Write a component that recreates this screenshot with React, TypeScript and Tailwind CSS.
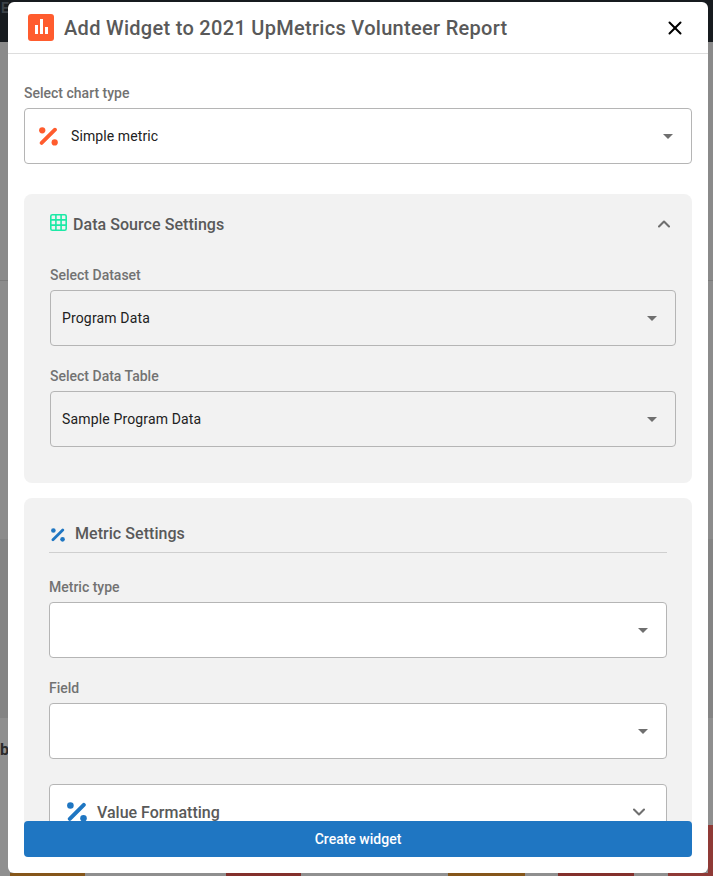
import { ChevronDown, ChevronUp, X } from 'lucide-react';

function PercentIcon({ className }: { className: string }) {
  return (
    <svg viewBox="0 0 20 20" className={className} fill="currentColor">
      <circle cx="3.4" cy="3.5" r="3.3" />
      <circle cx="16.5" cy="16.2" r="3.3" />
      <path d="M2.8 16.8 16.8 2.8" stroke="currentColor" strokeWidth="4" strokeLinecap="round" fill="none" />
    </svg>
  );
}

function GridIcon() {
  return (
    <svg viewBox="0 0 17 17" className="w-[17px] h-[17px] text-[#1de9a6] mb-1" fill="none" stroke="currentColor" strokeWidth="1.6">
      <rect x="0.8" y="0.8" width="15.4" height="15.4" rx="1.5" />
      <path d="M5.9 .8v15.4M11.1 .8v15.4M.8 5.9h15.4M.8 11.1h15.4" />
    </svg>
  );
}

function Caret() {
  return <span className="w-0 h-0 border-x-[5px] border-x-transparent border-t-[5px] border-t-[#6f6f6f]" />;
}

function SelectBox({ value, bg = 'bg-[#f2f2f2]' }: { value?: string; bg?: string }) {
  return (
    <div className={`h-14 flex items-center justify-between pl-[11px] pr-[18px] border border-[#b5b5b5] rounded ${bg}`}>
      <span className="text-sm tracking-[0.15px] text-[#212121]">{value}</span>
      <Caret />
    </div>
  );
}

function Field({ label, value, bg, className }: { label: string; value?: string; bg?: string; className?: string }) {
  return (
    <div className={className}>
      <div className="text-sm leading-4 font-medium text-[#727272] mb-[7px]">{label}</div>
      <SelectBox value={value} bg={bg} />
    </div>
  );
}

const bottomBlocks = [
  'w-[75px] bg-[#85561a]',
  'w-[141px] bg-[#8f8f8f]',
  'w-[75px] bg-[#83302c]',
  'w-[147px] bg-[#909090]',
  'w-[77px] bg-[#85561a]',
  'w-[33px] bg-[#8f8f8f]',
  'w-[76px] bg-[#83302c]',
  'w-[34px] bg-[#8f8f8f]',
  'flex-1 bg-[#8f3a36]',
];

function PageBehind() {
  return (
    <div className="absolute inset-0 flex flex-col bg-[#8f8f8f]">
      <div className="h-[42px] bg-[#171b1f] text-[#3c4248] text-sm font-bold leading-4 pl-px">E</div>
      <div className="h-[239px] bg-[#8a8a8a] border-b border-[#7b7b7b]" />
      <div className="h-[258px] bg-[#8c8c8c]" />
      <div className="h-[179px] bg-[#848484]" />
      <div className="flex-1 relative bg-[#8f8f8f]">
        <span className="absolute left-0 top-5 text-base font-bold text-[#2b2b2b]">b</span>
        <div className="absolute right-0 top-[107px] w-[5px] h-[51px] bg-[#8f3a36]" />
        <div className="absolute bottom-0 left-0 right-0 h-[3px] flex pl-2.5">
          {bottomBlocks.map((block) => (
            <div key={block} className={block} />
          ))}
        </div>
      </div>
    </div>
  );
}

export default function App() {
  return (
    <div className="relative h-[876px] w-[713px] overflow-hidden font-['Roboto',sans-serif]">
      <PageBehind />
      <div className="relative ml-2 mt-0.5 w-[700px] h-[871px] bg-white rounded-md overflow-hidden">
        <header className="h-[51px] flex items-center justify-between pl-5 pr-[22px] border-b border-[#dddddd] box-content">
          <div className="flex items-center gap-2.5">
            <div className="w-[26px] h-[27px] bg-[#ff5c2e] rounded-[3px] flex items-end justify-center gap-[2px] pb-[7px]">
              <span className="w-[3px] h-[9px] bg-white" />
              <span className="w-[3px] h-[15px] bg-white" />
              <span className="w-[3px] h-[7px] bg-white" />
            </div>
            <h1 className="text-xl font-medium tracking-[0.3px] text-[#595959] pt-px">Add Widget to 2021 UpMetrics Volunteer Report</h1>
          </div>
          <X size={22} strokeWidth={2.2} className="text-black" />
        </header>

        <div className="px-4 pt-[31px]">
          <div className="text-sm leading-4 font-medium text-[#727272] mb-[7px]">Select chart type</div>
          <div className="h-14 flex items-center justify-between pl-[14px] pr-[18px] border border-[#b5b5b5] rounded">
            <div className="flex items-center gap-[13px]">
              <PercentIcon className="w-[19px] h-[19px] text-[#ff5c2e]" />
              <span className="text-sm tracking-[0.1px] text-[#212121]">Simple metric</span>
            </div>
            <Caret />
          </div>

          <section className="mt-[30px] h-[289px] bg-[#f2f2f2] rounded-lg pl-[26px] pr-4 pt-5">
            <div className="flex items-center justify-between h-5 pr-0.5">
              <div className="flex items-center gap-1.5">
                <GridIcon />
                <span className="text-base font-medium tracking-[0.05px] text-[#595959] pt-0.5">Data Source Settings</span>
              </div>
              <ChevronUp size={20} strokeWidth={2.5} className="text-[#6f6f6f]" />
            </div>
            <Field className="mt-[33px]" label="Select Dataset" value="Program Data" />
            <Field className="mt-[22px]" label="Select Data Table" value="Sample Program Data" />
          </section>

          <section className="mt-[15px] bg-[#f2f2f2] rounded-lg px-[25px] pt-[25px]">
            <div className="flex items-center gap-2.5 h-5 pb-[9px] border-b border-[#cfcfcf] box-content">
              <PercentIcon className="w-3.5 h-3.5 ml-0.5 mt-1 text-[#1f76c2]" />
              <span className="text-base font-medium tracking-[0.05px] text-[#595959] pt-0.5">Metric Settings</span>
            </div>
            <Field className="mt-[26px]" label="Metric type" bg="bg-white" />
            <Field className="mt-[22px]" label="Field" bg="bg-white" />
            <div className="mt-[25px] h-14 bg-white border border-[#b5b5b5] rounded flex items-center justify-between pl-[17px] pr-[17px]">
              <div className="flex items-center gap-2.5">
                <PercentIcon className="w-5 h-5 text-[#1f76c2]" />
                <span className="text-base font-medium text-[#595959] pt-0.5">Value Formatting</span>
              </div>
              <ChevronDown size={20} strokeWidth={2.5} className="text-[#6f6f6f]" />
            </div>
          </section>
        </div>

        <button className="absolute left-4 right-4 bottom-4 h-9 bg-[#1f76c2] rounded text-white text-sm font-medium">
          Create widget
        </button>
      </div>
    </div>
  );
}
